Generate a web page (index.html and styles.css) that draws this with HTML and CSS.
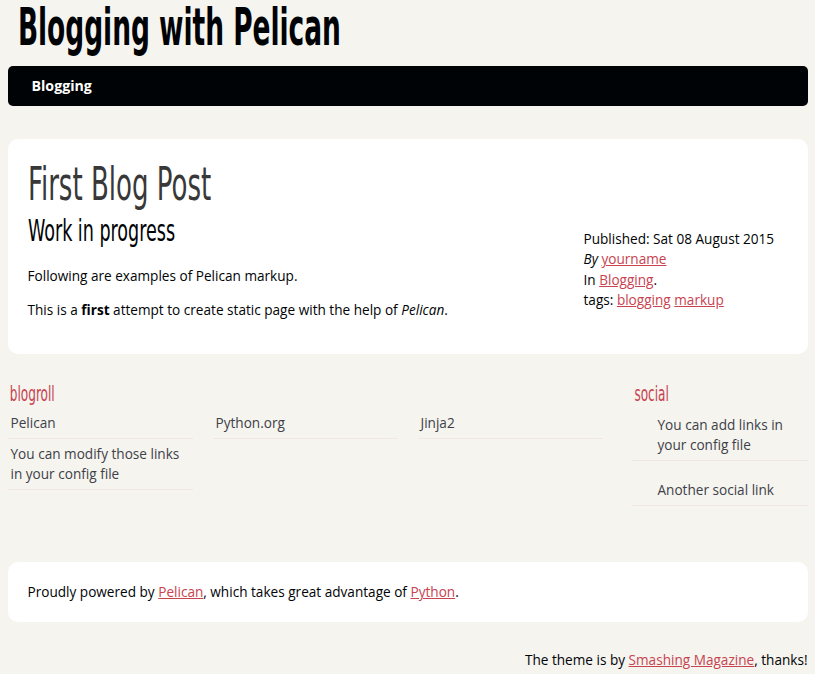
FILE: index.html
```html
<!DOCTYPE html>
<html lang="en">
<head>
<meta charset="utf-8">
<title>First Blog Post</title>
<link rel="stylesheet" href="styles.css">
</head>
<body>
<header class="banner">
  <h1 class="site-title"><a href="#">Blogging with Pelican</a></h1>
  <nav class="nav">
    <ul class="nav-list">
      <li><a href="#">Blogging</a></li>
    </ul>
  </nav>
</header>

<section class="card content">
  <h1 class="entry-title">First Blog Post</h1>
  <div class="entry-row">
    <div class="entry-content">
      <h2 class="entry-sub">Work in progress</h2>
      <p>Following are examples of Pelican markup.</p>
      <p>This is a <strong>first</strong> attempt to create static page with the help of <em>Pelican</em>.</p>
    </div>
    <footer class="post-info">
      <div>Published: Sat 08 August 2015</div>
      <div><em>By</em> <a href="#">yourname</a></div>
      <div>In <a href="#">Blogging</a>.</div>
      <div>tags: <a href="#">blogging</a> <a href="#">markup</a></div>
    </footer>
  </div>
</section>

<section class="extras">
  <div class="blogroll">
    <h2 class="extras-title">blogroll</h2>
    <ul class="blogroll-list">
      <li><a href="#">Pelican</a></li>
      <li><a href="#">Python.org</a></li>
      <li><a href="#">Jinja2</a></li>
      <li><a href="#">You can modify those links in your config file</a></li>
    </ul>
  </div>
  <div class="social">
    <h2 class="extras-title">social</h2>
    <ul class="social-list">
      <li><a href="#">You can add links in your config file</a></li>
      <li><a href="#">Another social link</a></li>
    </ul>
  </div>
</section>

<footer class="card about">
  Proudly powered by <a href="#">Pelican</a>, which takes great advantage of <a href="#">Python</a>.
</footer>

<p class="credit">The theme is by <a href="#">Smashing Magazine</a>, thanks!</p>
</body>
</html>
```

FILE: styles.css
```css
* { box-sizing: border-box; }

html { background: #F5F4EF; }

body {
  width: 800px;
  margin: 0 auto;
  background: #F5F4EF;
  color: #000305;
  font-family: "Open Sans", "DejaVu Sans", sans-serif;
  font-size: 13.6px;
  line-height: 20px;
}

a { color: #C74350; }

ul { list-style: none; margin: 0; padding: 0; }

.banner { padding-top: 0; }

.site-title {
  margin: -3px 0 9px;
  padding: 0 0 0 17.5px;
  font-family: "Liberation Sans Narrow", "DejaVu Sans Condensed", sans-serif;
  font-weight: bold;
  font-size: 52px;
  line-height: 60px;
  transform: scaleX(0.565);
  transform-origin: left center;
  white-space: nowrap;
}
.site-title a { color: #000305; text-decoration: none; }

.nav {
  background: #000305;
  border-radius: 5px;
  height: 40px;
}
.nav-list { display: flex; }
.nav-list a {
  display: block;
  padding: 0 24px;
  line-height: 40px;
  color: #fff;
  font-weight: bold;
  font-size: 14.2px;
  text-decoration: none;
}

.card {
  background: #fff;
  border-radius: 10px;
  padding: 20px;
}

.content { margin-top: 33px; }

.entry-title {
  margin: 0;
  font-family: "Liberation Sans Narrow", "DejaVu Sans Condensed", sans-serif;
  font-weight: normal;
  font-size: 46px;
  line-height: 50px;
  color: #383838;
  transform: scaleX(0.63);
  transform-origin: left center;
  white-space: nowrap;
}

.entry-row { display: flex; gap: 20px; }
.entry-content { flex: 1; }

.entry-sub {
  margin: 4px 0 17px;
  font-family: "Liberation Sans Narrow", "DejaVu Sans Condensed", sans-serif;
  font-weight: normal;
  font-size: 30px;
  line-height: 36px;
  color: #000305;
  transform: scaleX(0.65);
  transform-origin: left center;
  white-space: nowrap;
}

.entry-content p { margin: 0 0 14px; }

.post-info {
  width: 204px;
  margin-top: 20px;
  line-height: 20.4px;
}

.extras {
  display: flex;
  justify-content: space-between;
  margin-top: 26px;
}

.extras-title {
  margin: 0;
  padding-left: 3px;
  font-family: "Liberation Sans Narrow", "DejaVu Sans Condensed", sans-serif;
  font-weight: normal;
  font-size: 22px;
  line-height: 28px;
  color: #C74350;
  transform: scaleX(0.61);
  transform-origin: left center;
}

.blogroll { width: 595px; }
.blogroll-list {
  display: grid;
  grid-template-columns: repeat(3, 185px);
  column-gap: 20px;
  align-items: start;
}
.blogroll-list li,
.social-list li {
  border-bottom: 1px solid #F1E6E4;
  padding: 5px 3px;
}
.blogroll-list a,
.social-list a {
  color: #3E4148;
  text-decoration: none;
}

.social { width: 176px; }
.social .extras-title { padding-left: 4px; }
.social-list li {
  padding: 19px 3px 5px 26px;
}
.social-list { margin-top: -12px; }

.about { margin-top: 56px; }

.credit {
  margin: 28px 0 0;
  text-align: right;
}
```
